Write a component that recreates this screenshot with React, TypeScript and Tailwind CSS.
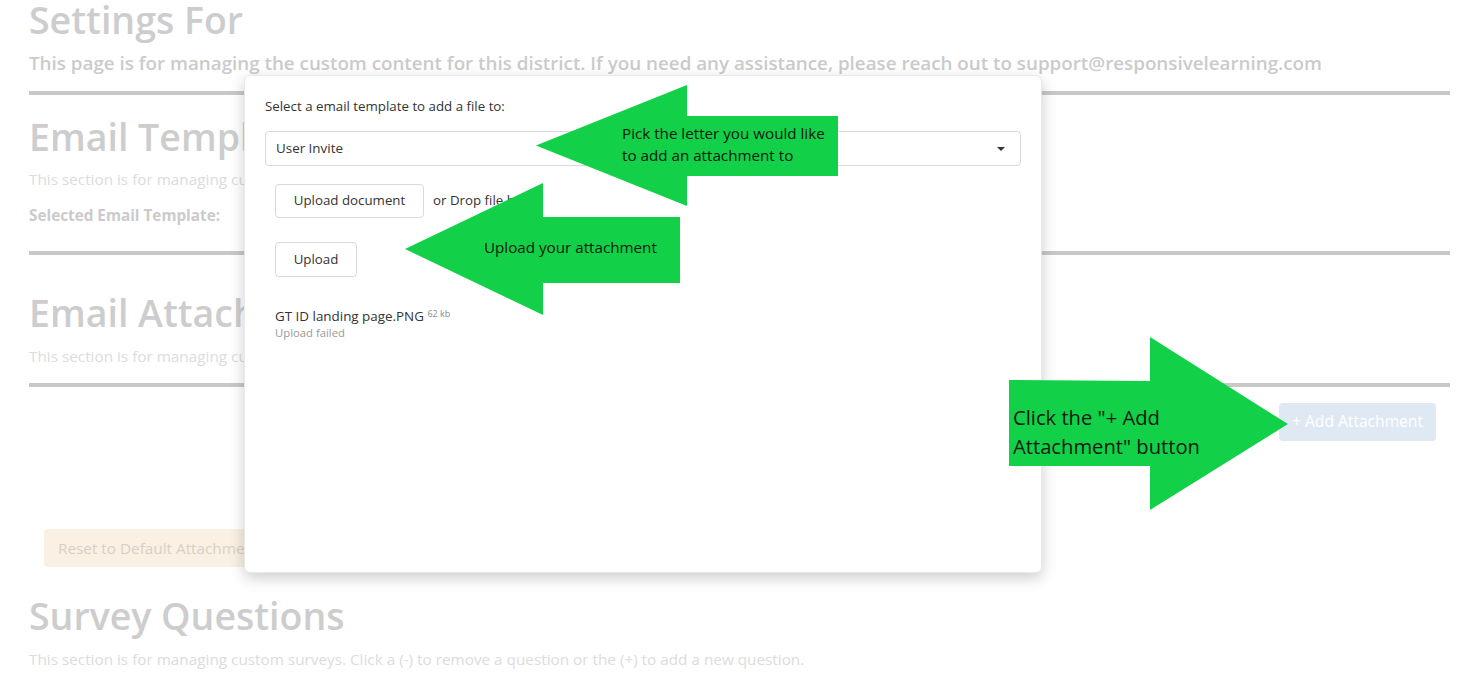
import React from "react";

const F = "font-['Open_Sans',sans-serif]";

function LeftArrow({ left, top, w, h, headW, shaftTop, shaftBot }: { left: number; top: number; w: number; h: number; headW: number; shaftTop: number; shaftBot: number }) {
  const pts = `0,${h / 2} ${headW},0 ${headW},${shaftTop} ${w},${shaftTop} ${w},${shaftBot} ${headW},${shaftBot} ${headW},${h}`;
  return (
    <svg className="absolute" style={{ left, top }} width={w} height={h} viewBox={`0 0 ${w} ${h}`}>
      <polygon points={pts} fill="#12d148" />
    </svg>
  );
}

export default function App() {
  return (
    <div className={`relative w-[1461px] h-[675px] overflow-hidden bg-white ${F}`}>
      {/* background page */}
      <div className="pl-[29px] pr-[11px]">
        <h1 className="text-[37.5px] leading-[40px] font-semibold text-[#cdcdcd]">Settings For</h1>
        <p className="mt-[9px] text-[18.8px] leading-[28px] font-semibold text-[#cbcbcb] whitespace-nowrap">
          This page is for managing the custom content for this district. If you need any assistance, please reach out to support@responsivelearning.com
        </p>
        <div className="mt-[14px] h-[4px] bg-[#c8c8c8]" />

        <h2 className="mt-[21.5px] text-[37.5px] leading-[40px] font-semibold text-[#cdcdcd]">Email Templates</h2>
        <p className="mt-[10.6px] text-[15.3px] leading-[24px] text-[#dcdcdc]">This section is for managing custom email templates.</p>
        <p className="mt-[12px] text-[15.3px] leading-[24px] font-bold text-[#cbcbcb]">Selected Email Template:</p>
        <div className="mt-[24px] h-[4px] bg-[#c8c8c8]" />

        <h2 className="mt-[37.5px] text-[37.5px] leading-[40px] font-semibold text-[#cdcdcd]">Email Attachments</h2>
        <p className="mt-[11.6px] text-[15.3px] leading-[24px] text-[#dcdcdc]">This section is for managing custom email attachments.</p>
        <div className="mt-[15px] h-[4px] bg-[#c8c8c8]" />

        <div className="mt-[16px] flex justify-end pr-[14px]">
          <button className="h-[38px] w-[157px] rounded-[4px] bg-[#dfe9f3] text-[15.6px] text-white">+ Add Attachment</button>
        </div>

        <div className="mt-[88px] pl-[15px]">
          <button className="h-[38px] px-[14px] rounded-[4px] bg-[#faf1e4] text-[15.3px] text-[#d8d0c7]">Reset to Default Attachments</button>
        </div>

        <h2 className="mt-[28.5px] text-[37.5px] leading-[40px] font-semibold text-[#cdcdcd]">Survey Questions</h2>
        <p className="mt-[11.6px] text-[15.3px] leading-[24px] text-[#dcdcdc] whitespace-nowrap">
          This section is for managing custom surveys. Click a (-) to remove a question or the (+) to add a new question.
        </p>
      </div>

      {/* modal */}
      <div className="absolute left-[244px] top-[75px] w-[798px] h-[498px] rounded-[6px] bg-white border border-[#e9e9e9] shadow-[0_5px_15px_rgba(0,0,0,0.2)] px-[20px] pt-[20px] text-[#333]">
        <p className="text-[13.3px] leading-[20px]">Select a email template to add a file to:</p>
        <div className="mt-[15px] h-[35px] rounded-[4px] border border-[#d9d9d9] flex items-center justify-between pl-[10px] pr-[15px]">
          <span className="text-[13.4px]">User Invite</span>
          <span className="w-0 h-0 border-l-[4px] border-r-[4px] border-t-[4px] border-l-transparent border-r-transparent border-t-[#333]" />
        </div>
        <div className="pl-[10px]">
          <div className="mt-[18px] flex items-center gap-[9px]">
            <button className="h-[34px] w-[149px] rounded-[4px] border border-[#d9d9d9] text-[13.3px] text-[#333]">Upload document</button>
            <span className="text-[13.3px]">or Drop file here</span>
          </div>
          <button className="mt-[24px] h-[35px] w-[82px] rounded-[4px] border border-[#d9d9d9] text-[13.3px] text-[#333]">Upload</button>
          <div className="mt-[28px]">
            <p className="text-[13.4px] leading-[18px]">
              GT ID landing page.PNG <span className="text-[9px] align-[4px] text-[#888]">62 kb</span>
            </p>
            <p className="text-[11.3px] leading-[15px] text-[#999]">Upload failed</p>
          </div>
        </div>
      </div>

      {/* arrows */}
      <LeftArrow left={536} top={85} w={302} h={121} headW={151} shaftTop={31} shaftBot={91} />
      <div className="absolute left-[622px] top-[122px] text-[15.2px] leading-[22px] text-[#0d1a0d] whitespace-nowrap">
        Pick the letter you would like
        <br />
        to add an attachment to
      </div>

      <LeftArrow left={405} top={183} w={275} h={132} headW={138} shaftTop={34} shaftBot={100} />
      <div className="absolute left-[484px] top-[236px] text-[15.2px] leading-[22px] text-[#0d1a0d] whitespace-nowrap">Upload your attachment</div>

      <svg className="absolute left-[1009px] top-[337px]" width={279} height={173} viewBox="0 0 279 173">
        <polygon points="0,43 141,44 141,0 279,87 141,173 141,129 0,129" fill="#12d148" />
      </svg>
      <div className="absolute left-[1013px] top-[403px] text-[20.2px] leading-[29px] text-[#0d1a0d] whitespace-nowrap">
        Click the "+ Add
        <br />
        Attachment" button
      </div>
    </div>
  );
}
